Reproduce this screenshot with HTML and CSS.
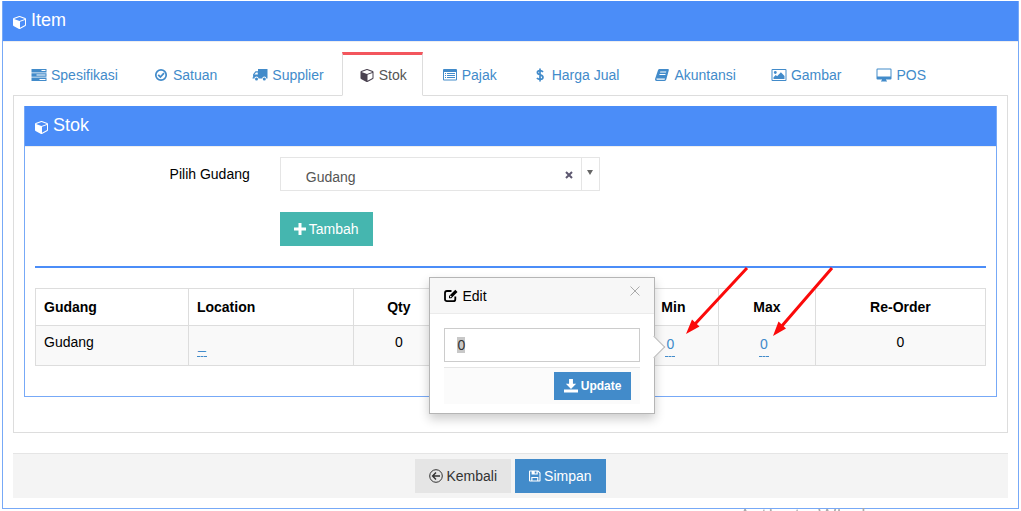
FILE: index.html
```html
<!DOCTYPE html>
<html lang="id">
<head>
  <meta charset="utf-8">
  <title>Item</title>
  <link rel="stylesheet" href="styles.css">
</head>
<body>

<svg class="sprite" aria-hidden="true">
  <symbol id="i-cube" viewBox="0 0 1664 1792"><path d="M896 1629l640-349v-636l-640 233v752zM832 764l698-254-698-254-698 254zM1664 512v768q0 35-18 65t-49 47l-704 384q-28 16-61 16t-61-16l-704-384q-31-17-49-47t-18-65v-768q0-40 23-73t61-47l704-256q22-8 44-8t44 8l704 256q38 14 61 47t23 73z"/></symbol>
  <symbol id="i-server" viewBox="0 0 15 14"><path fill-rule="evenodd" d="M0 1h15v3.500H0zM10 2v1h4V2zM0 5.300h15v3.400H0zM5 6.500v1h9v-1zM0 9.500h15V13H0zM8 11v1h6v-1z"/></symbol>
  <symbol id="i-check" viewBox="0 0 14 14"><circle cx="7" cy="7" r="5.200" fill="none" stroke="currentColor" stroke-width="1.700"/><path d="M4.200 6.800l2.200 2.200 3.600-3.800" fill="none" stroke="currentColor" stroke-width="1.800"/></symbol>
  <symbol id="i-truck" viewBox="0 0 15 14"><path fill-rule="evenodd" d="M5.500 1H15v9.500h-1.200a2 2 0 0 0-4 0H6a2 2 0 0 0-4 0H0V9.500h.6V6.200L3 3.300h2.500zM1.800 6.500h3.500v-2h-1.800z"/><circle cx="4" cy="11" r="1.500"/><circle cx="11.800" cy="11" r="1.500"/></symbol>
  <symbol id="i-list" viewBox="0 0 14 14"><path fill-rule="evenodd" d="M1 1h12a1 1 0 0 1 1 1v9.500a1 1 0 0 1-1 1H1a1 1 0 0 1-1-1V2a1 1 0 0 1 1-1zM1 4v7.500h12V4zM2 5h1v1H2zM4 5h8v1H4zM2 7h1v1H2zM4 7h8v1H4zM2 9h1v1H2zM4 9h8v1H4z"/></symbol>
  <symbol id="i-usd" viewBox="0 0 14 14"><path d="M10 4C9.200 2.900 8.200 2.600 7 2.600c-1.500 0-2.600.7-2.600 1.900C4.400 7.600 10 6.200 10 9.300c0 1.300-1.200 2.100-2.900 2.100-1.300 0-2.300-.4-3.200-1.400M7 .5v13" fill="none" stroke="currentColor" stroke-width="1.700"/></symbol>
  <symbol id="i-book" viewBox="0 0 14 14"><path fill-rule="evenodd" d="M4.600 1h8.200c.9 0 1.200.6 1 1.300L11.400 11c-.3 1.300-.8 2-2 2H1.600C.3 13-.3 11.800.2 10.600L2.900 2.500C3.200 1.500 3.700 1 4.600 1zM5.300 3.600L5 4.600h6l.3-1zM4.600 5.900l-.3 1h6l.3-1zM1.500 10.600c-.3.700 0 1.200.6 1.200h7.500l.4-1.200z"/></symbol>
  <symbol id="i-image" viewBox="0 0 15 14"><path fill-rule="evenodd" d="M1 1h13a1 1 0 0 1 1 1v10a1 1 0 0 1-1 1H1a1 1 0 0 1-1-1V2a1 1 0 0 1 1-1zM1 2v10h13V2z"/><circle cx="3.800" cy="4.500" r="1.400"/><path d="M2 11V9.200l2.300-2.300 1.300 1.300L9.400 4.300 13 7.900V11z"/></symbol>
  <symbol id="i-desktop" viewBox="0 0 15 14"><path fill-rule="evenodd" d="M1 .5h13a1 1 0 0 1 1 1v9a1 1 0 0 1-1 1H9.500V12.500h1v1h-6v-1h1v-1H1a1 1 0 0 1-1-1v-9a1 1 0 0 1 1-1zM1 1.500V8.500h13v-7z"/></symbol>
  <symbol id="i-plus" viewBox="0 0 12 12"><path d="M4.500 0h3v4.500H12v3H7.500V12h-3V7.500H0v-3h4.500z"/></symbol>
  <symbol id="i-edit" viewBox="0 0 14 14"><path d="M11.300 7.500v2.700c0 1.200-.8 2-2 2H3c-1.200 0-2-.8-2-2V4c0-1.200.8-2 2-2h4.500" fill="none" stroke="currentColor" stroke-width="1.800"/><path fill-rule="evenodd" d="M11.300.8l2.200 2.200-6.200 6.200H5V7zM6 7.300v1h1l.7-.7-1-1z"/></symbol>
  <symbol id="i-download" viewBox="0 0 13 13"><path d="M4.700 0h3.600v4.500h3L6.500 9.200 1.700 4.500h3zM0 9.800h13v2.700H0z"/></symbol>
  <symbol id="i-back" viewBox="0 0 14 14"><g fill="none" stroke="currentColor"><circle cx="7" cy="7" r="6.300" stroke-width="1"/><path d="M11 7H4M7 3.600L3.600 7 7 10.400" stroke-width="1.400"/></g></symbol>
  <symbol id="i-save" viewBox="0 0 13 13"><path fill-rule="evenodd" d="M1 .5h9l2.500 2.500v8.500a1 1 0 0 1-1 1H1a1 1 0 0 1-1-1v-10a1 1 0 0 1 1-1zM1.200 1.600v9.800h1.300V7.500h7.600v3.900h1.200V3.600l-1.800-2V5H2.800V1.600zM6.200 1.600v2.300h1.900V1.600zM3.700 8.600v2.800h5.200V8.600z"/></symbol>
</svg>

<div class="portlet">
  <div class="portlet-title"><svg class="icon"><use href="#i-cube"/></svg><h1>Item</h1></div>
  <div class="portlet-body">

    <ul class="nav-tabs">
      <li><a href="#spesifikasi"><svg class="icon"><use href="#i-server"/></svg>Spesifikasi</a></li>
      <li><a href="#satuan"><svg class="icon"><use href="#i-check"/></svg>Satuan</a></li>
      <li><a href="#supplier"><svg class="icon"><use href="#i-truck"/></svg>Supplier</a></li>
      <li class="active"><a href="#stok"><svg class="icon"><use href="#i-cube"/></svg>Stok</a></li>
      <li><a href="#pajak"><svg class="icon"><use href="#i-list"/></svg>Pajak</a></li>
      <li><a href="#harga"><svg class="icon"><use href="#i-usd"/></svg>Harga Jual</a></li>
      <li><a href="#akuntansi"><svg class="icon"><use href="#i-book"/></svg>Akuntansi</a></li>
      <li><a href="#gambar"><svg class="icon"><use href="#i-image"/></svg>Gambar</a></li>
      <li><a href="#pos"><svg class="icon"><use href="#i-desktop"/></svg>POS</a></li>
    </ul>

    <div class="tab-content" id="stok">
      <div class="portlet inner">
        <div class="portlet-title"><svg class="icon"><use href="#i-cube"/></svg><h2>Stok</h2></div>
        <div class="portlet-body">

          <div class="form-row">
            <label for="gudang">Pilih Gudang</label>
            <div class="select-box">
              <select id="gudang"><option>Gudang</option></select>
              <button type="button" class="clear" aria-label="Clear"><svg viewBox="0 0 8 8"><path d="M1 1l6 6M7 1L1 7"/></svg></button>
              <span class="caret"></span>
            </div>
            <button type="button" class="btn btn-green"><svg class="icon icon-sm"><use href="#i-plus"/></svg>Tambah</button>
          </div>

          <hr>

          <div class="table-wrap">
            <table>
              <colgroup>
                <col class="c-name"><col class="c-loc"><col class="c-num"><col class="c-mid"><col class="c-num"><col class="c-max"><col>
              </colgroup>
              <thead>
                <tr><th class="left">Gudang</th><th class="left">Location</th><th>Qty</th><th></th><th>Min</th><th>Max</th><th>Re-Order</th></tr>
              </thead>
              <tbody>
                <tr>
                  <td class="left">Gudang</td>
                  <td class="left"><a href="#loc" class="editable">_</a></td>
                  <td>0</td>
                  <td></td>
                  <td>
                    <div class="anchor">
                      <a href="#min" class="editable">0</a>
                      <form class="popover">
                        <div class="popover-title">
                          <svg class="icon"><use href="#i-edit"/></svg><label for="minVal">Edit</label>
                          <button type="button" class="close" aria-label="Close"><svg viewBox="0 0 10 10"><path d="M.5.5l9 9M9.500.5l-9 9"/></svg></button>
                        </div>
                        <div class="popover-content">
                          <div class="field"><input type="text" id="minVal" value="0"></div>
                          <div class="actions"><button type="button" class="btn btn-blue btn-sm"><svg class="icon"><use href="#i-download"/></svg>Update</button></div>
                        </div>
                      </form>
                    </div>
                  </td>
                  <td><a href="#max" class="editable">0</a></td>
                  <td>0</td>
                </tr>
              </tbody>
            </table>
            <svg class="arrows" viewBox="0 0 160 74">
              <path class="shaft" d="M67 2L15 58M152 2L101 61"/>
              <path class="head" d="M6 68l6-14.500 7.500 7zM93 70l5.500-14.500 7.500 7z"/>
            </svg>
          </div>

        </div>
      </div>
    </div>

    <div class="form-actions">
      <button type="button" class="btn btn-default"><svg class="icon"><use href="#i-back"/></svg>Kembali</button>
      <button type="button" class="btn btn-blue"><svg class="icon icon-sm"><use href="#i-save"/></svg>Simpan</button>
    </div>

  </div>
</div>

<div class="watermark">Activate Windows</div>

<script>
  // open the editor with its value selected
  const field = document.getElementById('minVal');
  field.focus({ preventScroll: true });
  field.select();
</script>
</body>
</html>
```
FILE: styles.css
```css
* { box-sizing: border-box; }
body { margin: 1px 2px 0; font: 14px/20px "Liberation Sans", Arial, sans-serif; color: #000; background: #fff; }
button, input, select { font: inherit; margin: 0; border-radius: 0; }
a { color: #428bca; text-decoration: none; }
.sprite { position: absolute; width: 0; height: 0; }
.icon { width: 14px; height: 14px; fill: currentColor; flex: none; }
.icon-sm { width: 12px; height: 12px; }

/* portlets */
.portlet { border: 1px solid #77a9f7; border-top: 0; }
.portlet-title { display: flex; align-items: center; gap: 5px; height: 41px; padding: 0 10px 2px; background: #4b8df8; border-bottom: 1px solid #eee; color: #fff; }
.portlet-title h1, .portlet-title h2 { margin: 0; font-size: 18px; line-height: 20px; font-weight: 400; }
.portlet-title .icon { width: 13px; margin-top: 3px; }
.portlet-body { padding: 10px; }
.inner { margin-bottom: 25px; }

/* tabs */
.nav-tabs { display: flex; list-style: none; margin: 0; padding: 0 0 0 1px; border-bottom: 1px solid #ddd; }
.nav-tabs li { margin: 0 2px -1px 0; }
.nav-tabs a { display: flex; align-items: center; gap: 3px; padding: 10px 15px; border: 1px solid transparent; border-top-width: 3px; }
.nav-tabs .icon { width: 18px; }
.nav-tabs .active a { color: #555; background: #fff; border-color: #ddd; border-top-color: #f3565d; border-bottom-color: #fff; }
.nav-tabs .active .icon { color: #4a4250; }
.tab-content { border: 1px solid #ddd; border-top: 0; padding: 10px; margin-bottom: 20px; }

/* form */
.form-row { display: grid; grid-template-columns: calc(25% - 23px) minmax(0, 320px); gap: 21px 30px; }
.form-row > label { text-align: right; padding: 7px 0; }
.form-row > .btn { grid-column: 2; justify-self: start; }
.select-box { display: flex; height: 34px; border: 1px solid #e5e5e5; }
.select-box select { flex: 1; appearance: none; border: 0; background: none; color: #555; padding: 6px 0 0 25px; }
.clear { width: 24px; border: 0; padding: 0; background: none; }
.clear svg { width: 8px; height: 8px; stroke: #5d5870; stroke-width: 2; }
.caret { width: 18px; border-left: 1px solid #e5e5e5; display: flex; justify-content: center; padding-top: 12px; }
.caret::before { content: ""; height: 5px; border: 3px solid transparent; border-top: 5px solid #666; border-bottom: 0; }

.btn { display: inline-flex; align-items: center; gap: 3px; border: 0; padding: 7px 14px; color: #fff; }
.btn-green { background: #45b6af; }
.btn-blue { background: #428bca; }
.btn-default { background: #e5e5e5; color: #333; }
.btn-sm { padding: 4px 10px; font-size: 12px; font-weight: 700; }

hr { border: 0; height: 2px; margin: 20px 0; background: #4b8df8; }

/* table */
.table-wrap { position: relative; margin-bottom: 20px; }
table { width: 100%; table-layout: fixed; border-collapse: collapse; }
th, td { border: 1px solid #ddd; padding: 8px; text-align: center; vertical-align: top; }
td { background: #f9f9f9; line-height: 17px; }
.left { text-align: left; }
.c-name { width: 16.1%; }
.c-loc { width: 17.4%; }
.c-num { width: 9.5%; }
.c-mid { width: 19.4%; }
.c-max { width: 10.2%; }
.editable { display: inline-block; vertical-align: top; min-width: 10px; margin-right: 6px; padding-bottom: 2px; line-height: 20px; text-align: center; border-bottom: 1px dashed #428bca; }

/* popover */
.anchor { position: relative; display: inline-block; vertical-align: top; }
.popover { position: absolute; z-index: 2; right: calc(100% + 10px); top: -57px; width: 226px; background: #fff; border: 1px solid #b5b5b5; box-shadow: 0 5px 10px rgba(0, 0, 0, .2); text-align: left; line-height: 20px; }
.popover::after { content: ""; position: absolute; right: -8px; top: calc(50% - 7px); width: 15px; height: 15px; background: #fff; border: 1px solid #bbb; border-width: 1px 1px 0 0; transform: rotate(45deg); }
.popover-title { display: flex; align-items: center; gap: 4px; height: 36px; padding: 0 14px; background: #f7f7f7; border-bottom: 1px solid #ebebeb; }
.close { margin: 0 0 10px auto; border: 0; padding: 0; background: none; line-height: 0; }
.close svg { width: 10px; height: 10px; stroke: #aaa; }
.popover-content { padding: 14px 14px 9px; }
.field input { display: block; width: 100%; height: 34px; border: 1px solid #ccc; padding: 0 12px; outline: 0; color: #333; }
.field input::selection { background: #c8c8c8; color: #333; }
.actions { margin-top: 5px; padding: 4px 9px; display: flex; justify-content: flex-end; background: #fbfbfb; border-top: 1px solid #e5e5e5; }

.arrows { position: absolute; z-index: 1; right: 146px; top: -22px; width: 160px; height: 74px; }
.shaft { stroke: #fb0a0a; stroke-width: 3; }
.head { fill: #fb0a0a; }

.form-actions { display: flex; justify-content: center; gap: 4px; padding: 5px; background: #f4f4f4; border-top: 1px solid #e5e5e5; }

.watermark { position: fixed; right: 118px; bottom: -18px; font: 20px/26px "Open Sans", sans-serif; color: #aaa; white-space: nowrap; }
```
